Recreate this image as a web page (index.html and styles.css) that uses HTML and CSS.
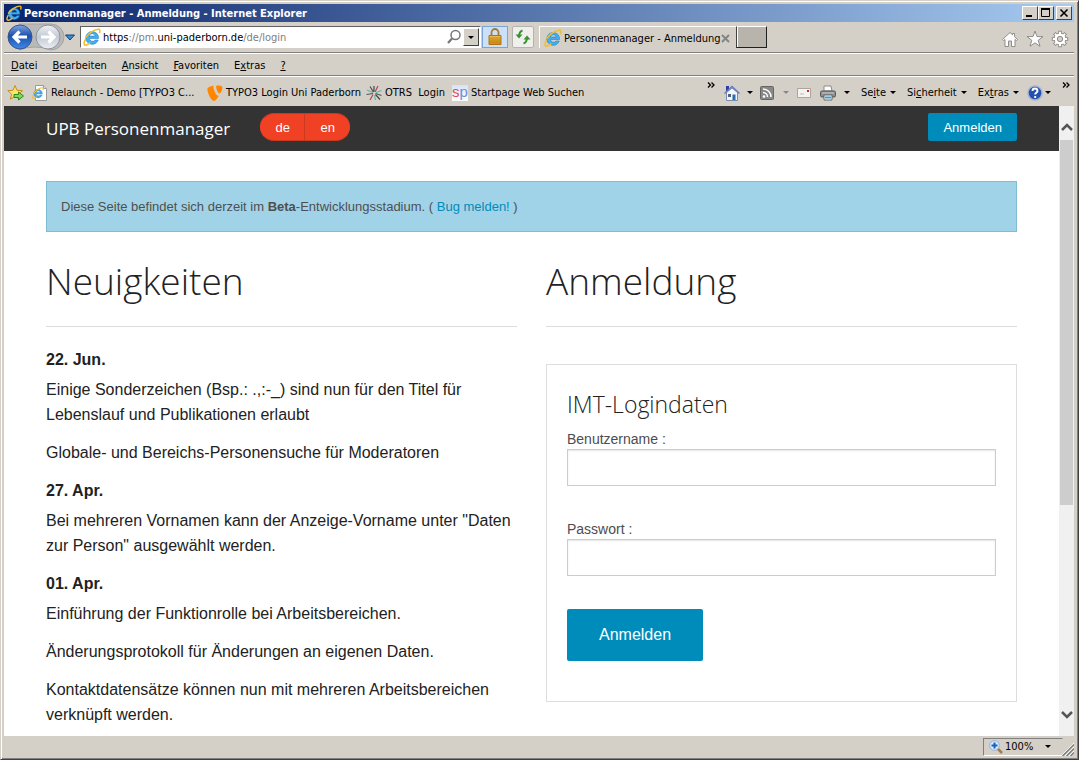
FILE: index.html
```
<!DOCTYPE html>
<html lang="de">
<head>
<meta charset="utf-8">
<title>Personenmanager - Anmeldung</title>
<link rel="stylesheet" href="styles.css">
</head>
<body>
<svg class="defs" aria-hidden="true">
  <defs>
    <linearGradient id="blue" x1="0" y1="0" x2="0" y2="1"><stop offset="0" stop-color="#7ea6e0"/><stop offset=".45" stop-color="#1c4fae"/><stop offset="1" stop-color="#3f8be8"/></linearGradient>
    <linearGradient id="grey" x1="0" y1="0" x2="0" y2="1"><stop offset="0" stop-color="#eef1f5"/><stop offset=".5" stop-color="#c3cad4"/><stop offset="1" stop-color="#eceff3"/></linearGradient>
    <linearGradient id="gold" x1="0" y1="0" x2="0" y2="1"><stop offset="0" stop-color="#f3c04a"/><stop offset="1" stop-color="#d08a10"/></linearGradient>
    <symbol id="ie" viewBox="0 0 16 16">
      <path d="M13.800 9.300H5.600a2.900 2.900 0 0 0 5.200 1.400h2.700a5.700 5.700 0 1 1 .3-1.400zM5.600 7.200h5.300a2.700 2.700 0 0 0-5.300 0z" fill="#45aeee" stroke="#1b7cc8" stroke-width=".5" fill-rule="evenodd"/>
      <path d="M2.300 10C.5 13 .4 15.500 2.500 15.200c1.300-.2 2.700-1.100 3.900-2.200M14.600 4.600c.8-2.300.5-3.700-1.200-3.500C9.800 1.400 4.300 5 2.300 8.800" fill="none" stroke="#f2bd2e" stroke-width="1.400"/>
    </symbol>
  </defs>
</svg>
<div class="window">
  <header class="titlebar">
    <svg class="i16"><use href="#ie"/></svg>
    <span class="title">Personenmanager - Anmeldung - Internet Explorer</span>
    <div class="winbuttons">
      <button type="button" aria-label="Minimieren"><svg viewBox="0 0 12 10"><path d="M2 8h6" stroke="#000" stroke-width="2"/></svg></button>
      <button type="button" aria-label="Maximieren"><svg viewBox="0 0 12 10"><path d="M1.500 1v7.500h8V1" fill="none" stroke="#000"/><path d="M1 1h9" stroke="#000" stroke-width="2"/></svg></button>
      <button type="button" class="close" aria-label="Schließen"><svg viewBox="0 0 12 10"><path d="M2.500 1.500l7 7m0-7l-7 7" stroke="#000" stroke-width="1.600"/></svg></button>
    </div>
  </header>

  <div class="navrow">
    <div class="history">
      <svg viewBox="0 0 72 28">
        <path d="M14 1h32a13 13 0 0 1 0 26q-16-6-32 0z" fill="#b9b9b9" stroke="#a5a5a5"/>
        <circle cx="15" cy="14" r="12" fill="url(#blue)" stroke="#3a5687"/>
        <path d="M14.500 8.500L9 14l5.500 5.500M9.500 14H22" fill="none" stroke="#fff" stroke-width="3.200"/>
        <circle cx="43" cy="14" r="12" fill="url(#grey)" stroke="#8d929b"/>
        <path d="M43.500 8.500L49 14l-5.500 5.500M48.500 14H36" fill="none" stroke="#fff" stroke-width="3.200"/>
        <path d="M60.500 12h9L65 17z" fill="#3b8fd0" stroke="#143f70"/>
      </svg>
    </div>
    <div class="address">
      <svg class="i18"><use href="#ie"/></svg>
      <div class="url">https<i>://pm.</i>uni-paderborn.de<i>/de/login</i></div>
      <svg class="i16" viewBox="0 0 16 16"><circle cx="9.500" cy="6" r="4.500" fill="none" stroke="#777" stroke-width="1.500"/><path d="M6 9.500L2 14" stroke="#777" stroke-width="2.200"/></svg>
      <button type="button" class="drop" aria-label="Adressliste"><b class="caret"></b></button>
    </div>
    <button type="button" class="lock" aria-label="Sicherheitsbericht"><svg class="i18" viewBox="0 0 18 18"><path d="M5.500 8V4.500a3.500 3.500 0 0 1 7 0V8" fill="none" stroke="#a67c2e" stroke-width="1.800"/><path d="M3 7.500h12v9H3z" fill="url(#gold)" stroke="#ad7413"/><path d="M3.500 10h11M3.500 12h11M3.500 14h11" stroke="#b67b12" stroke-width=".7"/></svg></button>
    <button type="button" class="reload" aria-label="Aktualisieren"><svg class="i16" viewBox="0 0 16 16"><path d="M7.500 1.500Q4 2.500 4 8M8.500 14.500q3.500-1 3.500-6.500" fill="none" stroke="#35942f" stroke-width="2"/><path d="M.5 5.500h7L4 9.500zM8.500 10.500h7L12 6.500z" fill="#35942f"/></svg></button>
    <div class="tab"><svg class="i18"><use href="#ie"/></svg><span>Personenmanager - Anmeldung</span>
      <button type="button" class="plain" aria-label="Tab schließen"><svg class="i9" viewBox="0 0 9 9"><path d="M1 1l7 7m0-7L1 8" stroke="#858585" stroke-width="2"/></svg></button></div>
    <button type="button" class="newtab" aria-label="Neuer Tab"></button>
    <div class="tools">
      <svg class="i18" viewBox="0 0 18 18"><path d="M1.500 9.500L9 2.500l2.500 2.300V3.500h2v3.200l3 2.800-1 1-1.500-1v7h-3.500V11h-3v5.500H4v-7l-1.500 1z" fill="#fff" stroke="#8f8d89"/></svg>
      <svg class="i18" viewBox="0 0 18 18"><path d="M9 1l2 5.600h6l-4.800 3.700 1.800 6L9 12.800l-5 3.500 1.800-6L1 6.600h6z" fill="#fff" stroke="#8f8d89"/></svg>
      <svg class="i18" viewBox="0 0 18 18"><circle cx="9" cy="9" r="5.900" fill="#fff" stroke="#8f8d89"/><path d="M9 .8v3M9 14.200v3M.8 9h3M14.200 9h3M3.200 3.200l2.100 2.100M12.700 12.700l2.100 2.100M14.800 3.200l-2.100 2.100M5.300 12.700l-2.100 2.100" stroke="#8f8d89" stroke-width="3.600"/><path d="M9 1.800v3M9 13.200v3M1.800 9h3M13.200 9h3M3.900 3.900L6 6M12 12l2.100 2.100M14.100 3.900L12 6M6 12l-2.100 2.100" stroke="#fff" stroke-width="2"/><circle cx="9" cy="9" r="5.300" fill="#fff"/><circle cx="9" cy="9" r="2.700" fill="#d4d0c8" stroke="#8f8d89"/></svg>
    </div>
  </div>

  <nav class="menubar" aria-label="Menü">
    <a href="#"><u>D</u>atei</a><a href="#"><u>B</u>earbeiten</a><a href="#"><u>A</u>nsicht</a><a href="#"><u>F</u>avoriten</a><a href="#">E<u>x</u>tras</a><a href="#"><u>?</u></a>
  </nav>

  <div class="favrow">
    <svg class="i18" viewBox="0 0 18 18"><path d="M8 1.500l2 4.800 5.500.4-4.200 3.500 1.200 5L8 12.500l-4.700 2.700 1.400-5L.8 6.700l5.200-.4z" fill="#ffe36b" stroke="#c48e1b"/><path d="M7 10.500h4.500V8l5 4-5 4v-2.500H7z" fill="#7ed957" stroke="#2a8c1d"/></svg>
    <a href="#" class="fav demo"><svg class="i16" viewBox="0 0 16 16"><path d="M3.500.5h8l3 3v12h-11z" fill="#fff" stroke="#9a9a9a"/><path d="M11.500.5v3h3" fill="#ddd" stroke="#9a9a9a"/><svg y="2" width="12" height="12"><use href="#ie"/></svg></svg>Relaunch - Demo [TYPO3 C...</a>
    <a href="#" class="fav typo"><svg class="i16" viewBox="0 0 16 16"><path d="M11.800 10.700c-.3.100-.5.100-.7.100-2 0-4.700-6.600-4.700-8.800 0-.8.200-1.100.5-1.300C4.500 1 1.600 1.900.7 3 .5 3.300.4 3.700.4 4.300.4 7.800 4.200 16 6.800 16c1.200 0 3.300-2 5-5.300M10.500.400c2.400 0 4.900.4 4.900 1.800 0 2.800-1.800 6.200-2.700 6.200-1.600 0-3.600-4.500-3.600-6.700 0-1 .4-1.300 1.400-1.300" fill="#ff8700"/></svg>TYPO3 Login Uni Paderborn</a>
    <a href="#" class="fav otrs"><svg class="i16" viewBox="0 0 16 16" fill="none" stroke-width="1.200"><path d="M7 7.500L1 5" stroke="#7aa"/><path d="M7 8.500L.5 9.500M9.500 8.500l6 2" stroke="#555"/><path d="M9 7l3-6M7 9.500L4 15" stroke="#b34b4b"/><path d="M10 7.500l5.500-2M8.500 10l1 5" stroke="#5ab5be"/><path d="M7.500 7L4 1.500M9.500 9.500l4.500 5M8 6.500V1" stroke="#484848"/></svg>OTRS &nbsp;Login</a>
    <a href="#" class="fav start"><span class="sp"><b>s</b>p</span>Startpage Web Suchen</a>
    <div class="commands">
      <svg class="more" viewBox="0 0 8 6"><path d="M1 .5L3.500 3 1 5.500M4.500.5L7 3 4.500 5.500" fill="none" stroke="#000" stroke-width="1.300"/></svg>
      <svg class="i16" viewBox="0 0 16 16"><path d="M2 1h3v5H2z" fill="#313ba5"/><path d="M2.500 7.500L8 3l5.500 4.500v8h-11z" fill="#f2f5fb" stroke="#778bb5"/><path d="M.5 8.500L8 1.500l7.500 7" fill="none" stroke="#667db8" stroke-width="1.500"/><path d="M8.500 9.500h3V15h-3z" fill="#286cad"/><path d="M4 9h3v3H4z" fill="#536276"/></svg>
      <b class="caret c1"></b>
      <svg class="i14" viewBox="0 0 14 14"><rect x=".5" y=".5" width="13" height="13" rx="1" fill="#888" stroke="#666"/><circle cx="4" cy="10.500" r="1.300" fill="#fff"/><path d="M3 6.500a4.500 4.500 0 0 1 4.500 4.500M3 3a8 8 0 0 1 8 8" fill="none" stroke="#fff" stroke-width="1.500"/></svg>
      <b class="caret c2"></b>
      <svg class="i14" viewBox="0 0 14 14"><path d="M.5 2.500h13v9H.5z" fill="#f5f3f1" stroke="#aaa5a0"/><path d="M10 4h2v2h-2z" fill="#d42626"/><path d="M3 8h4" stroke="#bbb"/></svg>
      <svg class="i16 print" viewBox="0 0 16 16"><path d="M4 1h7l1 5H4z" fill="#fff" stroke="#8a8a8a"/><rect x=".5" y="6" width="15" height="6" rx="1.500" fill="#8b8e91" stroke="#555"/><path d="M2 8h12" stroke="#ccc"/><path d="M4 10h8v5H4z" fill="#fff" stroke="#666"/><path d="M5 12.500h6" stroke="#3b9ccb" stroke-width="2"/></svg>
      <b class="caret c3"></b>
      <a href="#">Se<u>i</u>te<b class="caret"></b></a>
      <a href="#">Si<u>c</u>herheit<b class="caret"></b></a>
      <a href="#">Ex<u>t</u>ras<b class="caret"></b></a>
      <a href="#" class="help" aria-label="Hilfe"><svg class="i16" viewBox="0 0 16 16"><circle cx="8" cy="8" r="7" fill="#2450ae" stroke="#a3b2cd" stroke-width="1.500"/><path d="M5.500 6q0-2.500 2.500-2.500T10.500 6c0 1.500-2.300 1.600-2.300 3.500M8.200 11v2" fill="none" stroke="#fff" stroke-width="1.900"/></svg><b class="caret"></b></a>
      <svg class="more last" viewBox="0 0 8 6"><path d="M1 .5L3.500 3 1 5.500M4.500.5L7 3 4.500 5.500" fill="none" stroke="#000" stroke-width="1.300"/></svg>
    </div>
  </div>

  <div class="viewport">
    <div class="page">
      <div class="topbar">
        <a href="#" class="brand">UPB Personenmanager</a>
        <div class="langs"><a href="#">de</a><a href="#">en</a></div>
        <a href="#" class="login">Anmelden</a>
      </div>
      <main>
        <div class="notice">Diese Seite befindet sich derzeit im <strong>Beta</strong>-Entwicklungsstadium. ( <a href="#">Bug melden!</a> )</div>
        <div class="columns">
          <section class="news">
            <h1>Neuigkeiten</h1>
            <h2>22. Jun.</h2>
            <p>Einige Sonderzeichen (Bsp.: .,:-_) sind nun für den Titel für Lebenslauf und Publikationen erlaubt</p>
            <p>Globale- und Bereichs-Personensuche für Moderatoren</p>
            <h2>27. Apr.</h2>
            <p>Bei mehreren Vornamen kann der Anzeige-Vorname unter "Daten zur Person" ausgewählt werden.</p>
            <h2>01. Apr.</h2>
            <p>Einführung der Funktionrolle bei Arbeitsbereichen.</p>
            <p>Änderungsprotokoll für Änderungen an eigenen Daten.</p>
            <p>Kontaktdatensätze können nun mit mehreren Arbeitsbereichen verknüpft werden.</p>
          </section>
          <section>
            <h1>Anmeldung</h1>
            <form class="panel">
              <h3>IMT-Logindaten</h3>
              <label for="user">Benutzername :</label>
              <input id="user" type="text">
              <label for="pass">Passwort :</label>
              <input id="pass" type="password">
              <button type="submit">Anmelden</button>
            </form>
          </section>
        </div>
      </main>
    </div>
    <div class="scrollbar">
      <svg viewBox="0 0 12 8"><path d="M1 7l5-5 5 5" fill="none" stroke="#555" stroke-width="2.500"/></svg>
      <div class="track"><div class="thumb"></div></div>
      <svg viewBox="0 0 12 8"><path d="M1 1l5 5 5-5" fill="none" stroke="#555" stroke-width="2.500"/></svg>
    </div>
  </div>

  <footer class="status">
    <button type="button" class="zoom"><svg class="i14" viewBox="0 0 14 14"><path d="M8 8l5 5" stroke="#a47a4b" stroke-width="2.500"/><circle cx="5.500" cy="5.500" r="4.800" fill="#dcecfc" stroke="#8eb0d8"/><path d="M5.500 2.500v6M2.500 5.500h6" stroke="#1c5fc0" stroke-width="2"/></svg><span>100%</span><b class="caret"></b></button>
    <svg class="grip" viewBox="0 0 13 13"><path d="M0 13L13 0M4 13l9-9M8 13l5-5" stroke="#fff"/><path d="M1.500 13L13 1.500M5.500 13L13 5.500M9.500 13L13 9.500" stroke="#808080" stroke-width="1.500"/></svg>
  </footer>
</div>
</body>
</html>
```
FILE: styles.css
```
* { box-sizing: border-box; }
body { margin: 0; }
button { padding: 0; font: inherit; color: inherit; }
a { color: inherit; text-decoration: none; }
svg { display: block; flex: none; }
.defs { position: absolute; width: 0; height: 0; }
.i9 { width: 9px; height: 9px; }
.i14 { width: 14px; height: 14px; }
.i16 { width: 16px; height: 16px; }
.i18 { width: 18px; height: 18px; }

.window {
  display: flex;
  flex-direction: column;
  height: 100vh;
  border: 1px solid;
  border-color: #d4d0c8 #404040 #404040 #d4d0c8;
  box-shadow: inset 1px 1px #fff, inset -1px -1px #808080;
  padding: 3px 4px 2px 3px;
  background: #d4d0c8;
  font-family: "DejaVu Sans Condensed", "DejaVu Sans", sans-serif;
  font-size: 11px;
  color: #000;
  overflow: hidden;
  white-space: nowrap;
}
.caret {
  border: 3px solid transparent;
  border-top-color: #000;
  border-bottom: 0;
}

.titlebar {
  display: flex;
  align-items: center;
  flex: none;
  height: 18px;
  padding: 0 2px;
  background: linear-gradient(90deg, #0a246a, #a6caf0);
  color: #fff;
  font-weight: bold;
}
.title { margin-left: 2px; }
.winbuttons { display: flex; margin-left: auto; }
.winbuttons button {
  width: 16px;
  height: 14px;
  border: 1px solid;
  border-color: #fff #404040 #404040 #fff;
  background: #d4d0c8;
}
.winbuttons .close { margin-left: 2px; }
.winbuttons svg { width: 12px; height: 10px; margin: auto; }

.navrow {
  display: flex;
  align-items: center;
  flex: none;
  height: 31px;
  border-bottom: 1px solid #808080;
}
.history { width: 76px; padding-left: 1px; }
.history svg { width: 72px; height: 28px; }
.address {
  display: flex;
  align-items: center;
  flex: 0 1 401px;
  height: 22px;
  padding-left: 2px;
  border: 1px solid;
  border-color: #606060 #fff #fff #606060;
  background: #fff;
}
.url { flex: 1; padding-top: 1px; margin-left: 2px; }
.url i { font-style: normal; color: #808080; }
.drop {
  display: flex;
  align-items: center;
  justify-content: center;
  width: 16px;
  height: 18px;
  margin: 0 1px;
  border: 1px solid;
  border-color: #fff #404040 #404040 #fff;
  background: #d4d0c8;
}
.lock, .reload {
  display: flex;
  align-items: center;
  justify-content: center;
  width: 26px;
  height: 22px;
  margin-left: 1px;
  border: 1px solid #7ba4d9;
  background: #cde0fa;
}
.reload {
  width: 22px;
  margin-left: 4px;
  border-color: #b5b3ae;
  border-radius: 2px;
  background: #f0efed;
}
.tab {
  display: flex;
  align-items: center;
  height: 22px;
  width: 197px;
  margin-left: 5px;
  padding: 1px 0 0 4px;
  border-top: 1px solid #fff;
  border-left: 1px solid #fff;
}
.tab span { margin-left: 2px; }
.plain { margin: 0 6px 0 auto; border: 0; background: none; }
.newtab {
  width: 31px;
  height: 22px;
  border: 1px solid;
  border-color: #fff #202020 #202020 #404040;
  box-shadow: inset 1px 0 #fff;
  background: #b8b4ab;
}
.tools { display: flex; gap: 7px; margin: 4px 5px 0 auto; }

.menubar {
  display: flex;
  align-items: center;
  gap: 15px;
  flex: none;
  height: 23px;
  padding: 1px 0 0 7px;
  border-top: 1px solid #fff;
  border-bottom: 1px solid #808080;
}

.favrow {
  display: flex;
  align-items: center;
  flex: none;
  height: 30px;
  padding: 2px 0 0 3px;
  border-top: 1px solid #fff;
}
.fav { display: flex; align-items: center; gap: 3px; }
.demo { width: 167px; margin-left: 7px; }
.typo { width: 159px; margin-left: 8px; }
.otrs { width: 80px; }
.start { margin-left: 6px; }
.sp {
  width: 16px;
  height: 16px;
  background: linear-gradient(#d5e3f6, #fff);
  color: #6c8fd5;
  font: 15px/13px "Liberation Sans", sans-serif;
}
.sp b { color: #dc4e53; font-weight: normal; }
.commands { display: flex; align-items: center; margin-left: auto; }
.commands a { display: flex; align-items: center; margin-left: 11px; }
.commands a .caret { margin-left: 4px; }
.more { width: 8px; height: 6px; margin: 0 9px 16px 0; }
.more.last { margin: 0 4px 16px 11px; }
.c1 { margin: 0 7px; }
.c2 { margin: 0 8px 0 9px; border-top-color: #888; }
.print { margin-left: 9px; }
.c3 { margin: 0 0 0 8px; }
.commands .help { margin-left: 8px; }
.commands .help .caret { margin-left: 2px; }

.viewport {
  display: flex;
  flex: 1;
  min-height: 0;
  background: #fff;
  font-family: "Liberation Sans", Arial, sans-serif;
  white-space: normal;
}
.page { flex: 1; overflow: hidden; color: #222; }
.topbar {
  display: flex;
  align-items: center;
  height: 45px;
  padding: 0 42px;
  background: #333;
  color: #fff;
}
.brand { font: 17px/45px "Open Sans", sans-serif; }
.langs { display: flex; margin: 0 auto 3px 30px; font-size: 13px; }
.langs a {
  width: 45px;
  height: 28px;
  border: 1px solid #c93a20;
  border-left-color: #f04124;
  border-radius: 14px 0 0 14px;
  background: #f04124;
  line-height: 27px;
  text-align: center;
}
.langs a:last-child {
  border-color: #c93a20 #f04124 #c93a20 #f04124;
  border-radius: 0 14px 14px 0;
}
.login {
  height: 28px;
  padding: 0 15px;
  margin-bottom: 3px;
  border-radius: 2px;
  background: #008cba;
  font-size: 13px;
  line-height: 29px;
}
main { padding: 30px 42px 0; }
.notice {
  padding: 15px 14px;
  border: 1px solid #7ebdd3;
  background: #a0d3e8;
  color: #4f4f4f;
  font-size: 13px;
  line-height: 19px;
}
.notice a { color: #008cba; }
.columns { display: grid; grid-template-columns: 1fr 1fr; gap: 29px; }
h1 {
  margin: 23px 0 20px;
  padding-bottom: 19px;
  border-bottom: 1px solid #ddd;
  font: 300 37px/52px "Open Sans", sans-serif;
}
.news { font-size: 16px; line-height: 25px; }
.news h2 { margin: 0 0 5px; font-size: 16px; line-height: 25px; }
.news p { margin: 0 0 13px; }
.panel {
  margin-top: 37px;
  padding: 20px;
  border: 1px solid #ddd;
}
.panel h3 { margin: 3px 0 9px; font: 300 23px/32px "Open Sans", sans-serif; }
.panel label {
  display: block;
  color: #4d4d4d;
  font-size: 14px;
  line-height: 20px;
}
.panel input {
  display: block;
  width: 100%;
  height: 37px;
  margin-bottom: 33px;
  padding: 8px;
  border: 1px solid #ccc;
  box-shadow: inset 0 1px 2px rgba(0, 0, 0, .1);
}
.panel button {
  display: block;
  height: 52px;
  margin-bottom: 20px;
  padding: 0 32px;
  border: 0;
  border-radius: 2px;
  background: #008cba;
  color: #fff;
  font-size: 16px;
}
.scrollbar {
  display: flex;
  flex-direction: column;
  align-items: center;
  width: 15px;
  padding: 17px 0;
  background: #f0f0f0;
}
.scrollbar svg { width: 12px; height: 8px; }
.track { flex: 1; width: 13px; padding: 9px 0; }
.thumb { height: 65%; background: #cdcdcd; }

.status {
  display: flex;
  align-items: center;
  justify-content: flex-end;
  flex: none;
  height: 21px;
}
.zoom {
  display: flex;
  align-items: center;
  width: 80px;
  height: 18px;
  padding-left: 5px;
  border: 1px solid;
  border-color: #808080 #d4d0c8 #fff #808080;
  background: none;
}
.zoom span { width: 40px; margin-left: 2px; text-align: left; }
.grip { width: 13px; height: 13px; margin: 6px 0 0 -2px; }
```
